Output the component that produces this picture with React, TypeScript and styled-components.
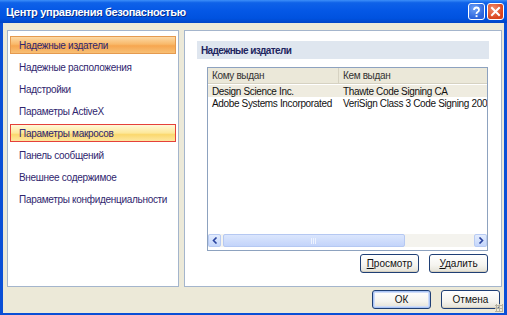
import React from 'react';
import styled, { createGlobalStyle } from 'styled-components';

const Global = createGlobalStyle`
  html, body { margin: 0; padding: 0; background: #fff; }
  body { font-family: "Liberation Sans", Tahoma, sans-serif; font-size: 10px; }
`;

const Window = styled.div`
  width: 507px;
  height: 315px;
  display: flex;
  flex-direction: column;
  background: #0a4fd6;
  overflow: hidden;
`;

const TitleBar = styled.div`
  height: 23px;
  display: flex;
  align-items: center;
  padding: 0 3px 0 6px;
  background: linear-gradient(#3d8ff9 0%, #0f62e8 12%, #0558e6 45%, #0052df 80%, #0044c6 100%);
  color: #fff;
  font-weight: bold;
  font-size: 11px;
  text-shadow: 1px 1px 0 #0a2e8a;
`;

const Title = styled.div`
  flex: 1;
  letter-spacing: -0.3px;
`;

const CaptionButton = styled.div<{ $red?: boolean }>`
  width: 17px;
  height: 17px;
  margin-left: 2px;
  border: 1px solid #fff;
  border-radius: 3px;
  box-sizing: border-box;
  display: flex;
  align-items: center;
  justify-content: center;
  background: ${p => p.$red
    ? 'radial-gradient(circle at 35% 30%, #f08a6a, #d9431c 70%)'
    : 'radial-gradient(circle at 35% 30%, #6fa2f7, #2a63dc 70%)'};
  text-shadow: none;
`;

const Body = styled.div`
  flex: 1;
  position: relative;
  margin: 0 3px 2px 3px;
  background: #ece9d8;
  display: flex;
  flex-direction: column;
  padding: 7px 2px 0 4px;
`;

const Main = styled.div`
  display: flex;
  gap: 5px;
  height: 257px;
`;

const Nav = styled.div`
  width: 172px;
  box-sizing: border-box;
  background: #fff;
  border: 1px solid #a4b5cc;
  padding: 5px 2px;
  display: flex;
  flex-direction: column;
  gap: 4px;
`;

const NavItem = styled.div<{ $state?: 'selected' | 'hover' }>`
  height: 18px;
  box-sizing: border-box;
  display: flex;
  align-items: center;
  padding-left: 8px;
  white-space: nowrap;
  letter-spacing: -0.3px;
  color: #30266e;
  border: 1px solid transparent;
  ${p => p.$state === 'selected' && `
    background: linear-gradient(#fcd9a6 0%, #f9b96a 45%, #f6a650 55%, #f8bf75 100%);
    border-color: #e59a4f;
  `}
  ${p => p.$state === 'hover' && `
    background: linear-gradient(#fff8d9 0%, #fde89a 50%, #fbd86e 60%, #fde7a0 100%);
    border-color: #e5403a;
  `}
`;

const Content = styled.div`
  flex: 1;
  box-sizing: border-box;
  background: #fff;
  border: 1px solid #a4b5cc;
  padding: 10px 12px 0 12px;
  display: flex;
  flex-direction: column;
`;

const SectionHeader = styled.div`
  height: 18px;
  display: flex;
  align-items: center;
  padding-left: 4px;
  background: #dfe6ef;
  color: #1e2560;
  font-weight: bold;
  letter-spacing: -0.6px;
`;

const List = styled.div`
  margin: 8px 1px 0 10px;
  height: 184px;
  box-sizing: border-box;
  border: 1px solid #8da2bf;
  display: flex;
  flex-direction: column;
  overflow: hidden;
`;

const Row = styled.div<{ $head?: boolean; $sel?: boolean }>`
  display: grid;
  grid-template-columns: 131px 1fr;
  height: ${p => (p.$head ? '15px' : '12px')};
  align-items: center;
  white-space: nowrap;
  letter-spacing: -0.35px;
  color: #111;
  background: ${p => (p.$head ? '#ebe8d9' : p.$sel ? '#efece0' : '#fff')};
  ${p => p.$head && 'border-bottom: 1px solid #d6d2c2; margin-bottom: 1px; color: #333;'}
`;

const Cell = styled.div<{ $head?: boolean }>`
  padding-left: 4px;
  overflow: hidden;
  ${p => p.$head && 'border-right: 1px solid #d6d2c2; height: 100%; display: flex; align-items: center;'}
`;

const Spacer = styled.div`
  flex: 1;
`;

const HScroll = styled.div`
  height: 13px;
  display: flex;
  align-items: center;
  background: #f4f3ee;
  margin-bottom: 3px;
`;

const ScrollArrow = styled.div`
  width: 13px;
  height: 13px;
  box-sizing: border-box;
  background: linear-gradient(#e3ecfd, #c4d6fb);
  border: 1px solid #b8cbf3;
  border-radius: 2px;
  display: flex;
  align-items: center;
  justify-content: center;
`;

const Thumb = styled.div`
  width: 182px;
  height: 13px;
  margin-left: 2px;
  box-sizing: border-box;
  background: linear-gradient(#dbe6fd, #c3d4fa);
  border: 1px solid #b5c8f2;
  border-radius: 2px;
  display: flex;
  align-items: center;
  justify-content: center;
`;

const Track = styled.div`
  flex: 1;
`;

const ButtonRow = styled.div<{ $pad?: string }>`
  display: flex;
  justify-content: flex-end;
  gap: 10px;
  padding: ${p => p.$pad || '0'};
`;

const Button = styled.div<{ $default?: boolean }>`
  width: 59px;
  height: 19px;
  box-sizing: border-box;
  border: 1px solid #1f3f75;
  border-radius: 3px;
  display: flex;
  align-items: center;
  justify-content: center;
  color: #111;
  background: linear-gradient(#ffffff 0%, #f5f4ef 60%, #e3e1d6 100%);
  box-shadow: ${p => (p.$default ? 'inset 0 0 0 1px #a9c4f5, inset 0 0 0 2px #cfdcf8' : 'inset 0 -1px 0 #d6d0c0')};
  u { text-decoration: underline; }
`;

const Grip = styled.div`
  position: absolute;
  right: 1px;
  bottom: 1px;
  width: 8px;
  height: 8px;
  background-image: radial-gradient(circle, #b5b1a0 1px, transparent 1.2px);
  background-size: 3px 3px;
`;

const navItems = [
  'Надежные издатели',
  'Надежные расположения',
  'Надстройки',
  'Параметры ActiveX',
  'Параметры макросов',
  'Панель сообщений',
  'Внешнее содержимое',
  'Параметры конфиденциальности',
];

const rows = [
  ['Design Science Inc.', 'Thawte Code Signing CA'],
  ['Adobe Systems Incorporated', 'VeriSign Class 3 Code Signing 2001'],
];

export default function App() {
  return (
    <Window>
      <Global />
      <TitleBar>
        <Title>Центр управления безопасностью</Title>
        <CaptionButton>
          <svg width="11" height="12" viewBox="0 0 11 12">
            <path d="M3 4 Q3 1.5 5.5 1.5 Q8 1.5 8 4 Q8 5.5 6.3 6.3 Q5.5 6.8 5.5 8" stroke="#fff" strokeWidth="1.8" fill="none" />
            <rect x="4.6" y="9.2" width="1.9" height="1.9" fill="#fff" />
          </svg>
        </CaptionButton>
        <CaptionButton $red>
          <svg width="11" height="11" viewBox="0 0 11 11">
            <path d="M2 2 L9 9 M9 2 L2 9" stroke="#fff" strokeWidth="2" strokeLinecap="square" />
          </svg>
        </CaptionButton>
      </TitleBar>
      <Body>
        <Main>
          <Nav>
            {navItems.map((t, i) => (
              <NavItem key={t} $state={i === 0 ? 'selected' : i === 4 ? 'hover' : undefined}>{t}</NavItem>
            ))}
          </Nav>
          <Content>
            <SectionHeader>Надежные издатели</SectionHeader>
            <List>
              <Row $head>
                <Cell $head>Кому выдан</Cell>
                <Cell>Кем выдан</Cell>
              </Row>
              {rows.map((r, i) => (
                <Row key={r[0]} $sel={i === 0}>
                  <Cell>{r[0]}</Cell>
                  <Cell>{r[1]}</Cell>
                </Row>
              ))}
              <Spacer />
              <HScroll>
                <ScrollArrow>
                  <svg width="6" height="7" viewBox="0 0 6 7"><path d="M4.5 0.5 L1.5 3.5 L4.5 6.5" stroke="#2b45a0" strokeWidth="1.6" fill="none" /></svg>
                </ScrollArrow>
                <Thumb>
                  <svg width="6" height="6" viewBox="0 0 6 6"><path d="M0.5 0 V6 M2.5 0 V6 M4.5 0 V6" stroke="#eef3fe" strokeWidth="1" /></svg>
                </Thumb>
                <Track />
                <ScrollArrow>
                  <svg width="6" height="7" viewBox="0 0 6 7"><path d="M1.5 0.5 L4.5 3.5 L1.5 6.5" stroke="#2b45a0" strokeWidth="1.6" fill="none" /></svg>
                </ScrollArrow>
              </HScroll>
            </List>
            <ButtonRow $pad="3px 1px 0 0">
              <Button><span><u>П</u>росмотр</span></Button>
              <Button><span><u>У</u>далить</span></Button>
            </ButtonRow>
          </Content>
        </Main>
        <ButtonRow $pad="3px 2px 0 0">
          <Button $default>ОК</Button>
          <Button>Отмена</Button>
        </ButtonRow>
        <Grip />
      </Body>
    </Window>
  );
}
